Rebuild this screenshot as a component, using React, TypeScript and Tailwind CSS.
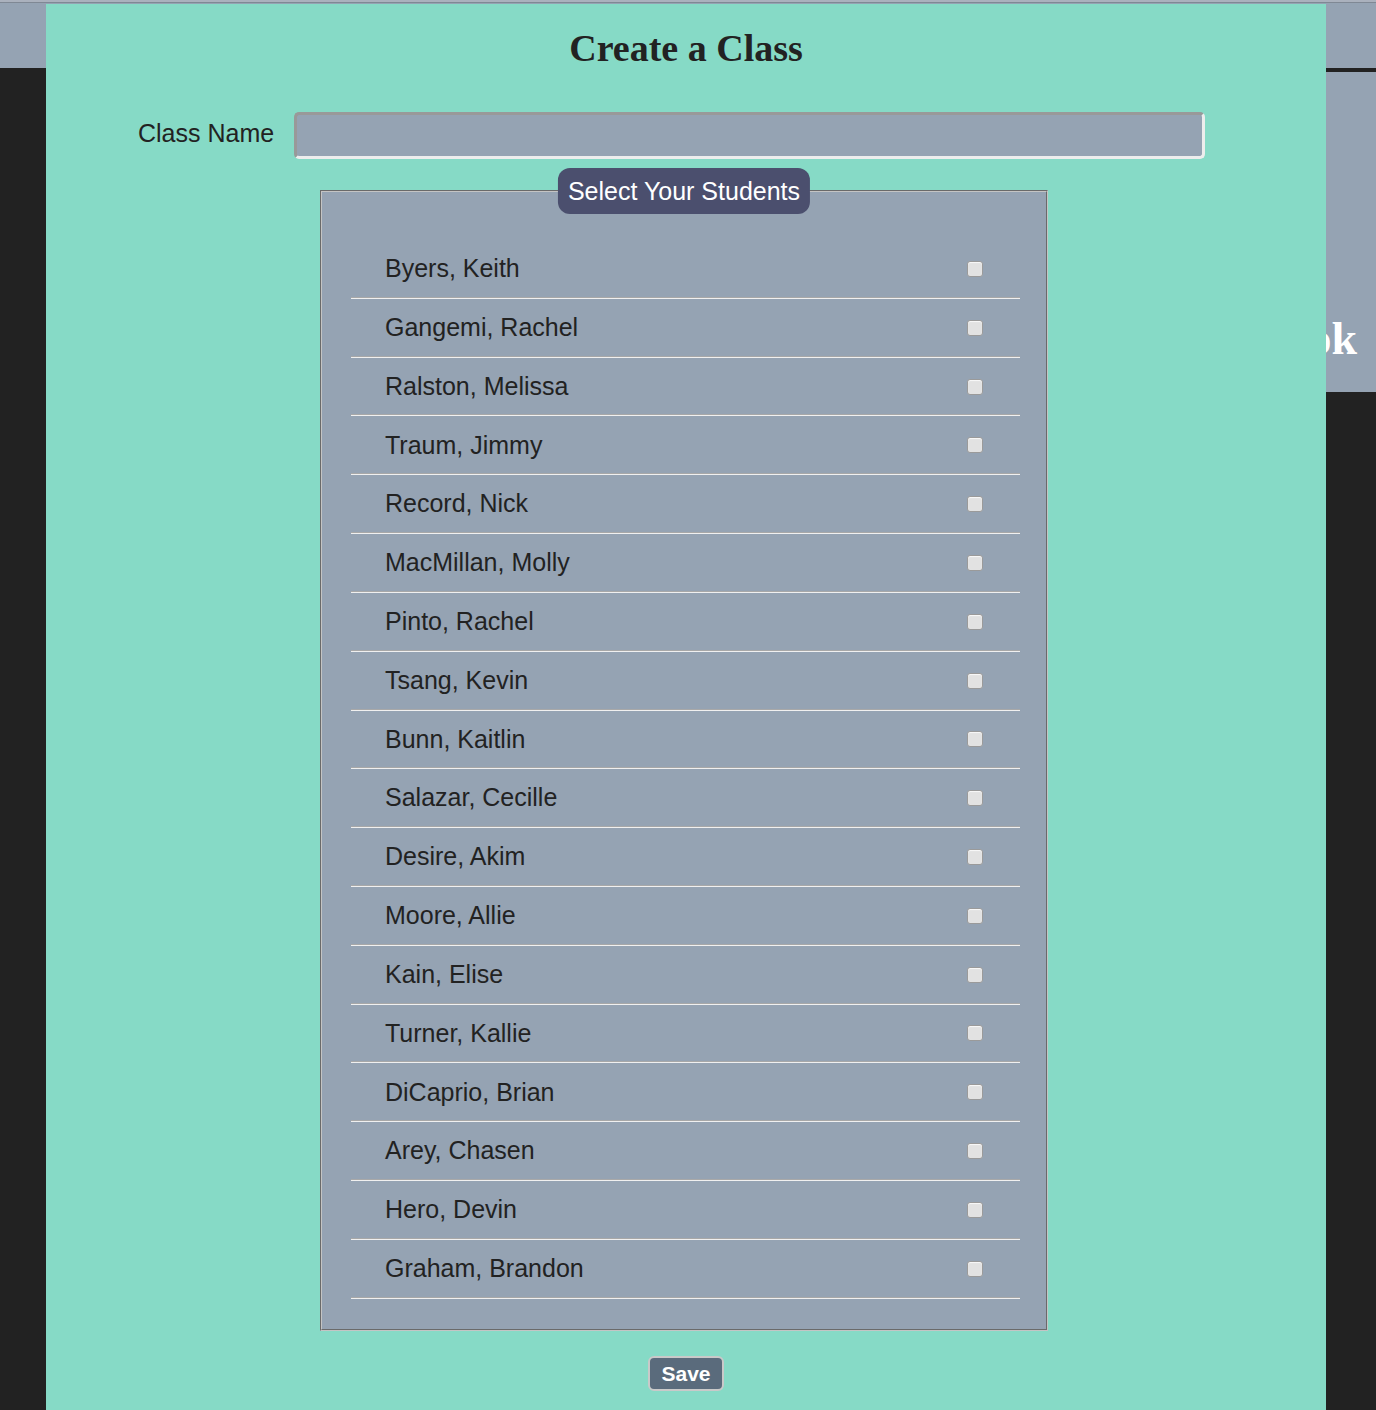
import React from "react";

const students = [
  "Byers, Keith",
  "Gangemi, Rachel",
  "Ralston, Melissa",
  "Traum, Jimmy",
  "Record, Nick",
  "MacMillan, Molly",
  "Pinto, Rachel",
  "Tsang, Kevin",
  "Bunn, Kaitlin",
  "Salazar, Cecille",
  "Desire, Akim",
  "Moore, Allie",
  "Kain, Elise",
  "Turner, Kallie",
  "DiCaprio, Brian",
  "Arey, Chasen",
  "Hero, Devin",
  "Graham, Brandon",
];

const App: React.FC = () => {
  return (
    <div className="relative h-[1410px] overflow-hidden bg-[#222222] font-['Liberation_Sans',Arial,sans-serif]">
      {/* page behind the modal */}
      <div className="h-[3px] border-b border-[#7f8894] bg-[#aab1bd]" />
      <div className="h-[65px] bg-[#95a3b3]" />
      <div className="h-[4px] bg-[#222222]" />
      <div className="flex justify-end">
        <div className="flex h-[320px] w-[420px] items-end justify-end bg-[#95a3b3] pb-[19px] pr-[19px]">
          <span className="font-['Liberation_Serif',serif] text-[46px] font-bold text-white">
            Gradebook
          </span>
        </div>
      </div>

      {/* modal */}
      <div className="absolute left-[46px] top-[4px] h-[1406px] w-[1280px] bg-[#86dac6]">
        <h1 className="pt-[22px] text-center font-['Liberation_Serif',serif] text-[38px] font-bold leading-[44px] text-[#222222]">
          Create a Class
        </h1>

        <div className="mt-[42px] flex items-center pl-[92px]">
          <label className="mr-[20px] pb-[4px] text-[25px] text-[#222222]">Class Name</label>
          <input
            type="text"
            className="h-[47px] w-[911px] rounded-[5px] border-[3px] border-b-[#ededed] border-l-[#999999] border-r-[#ededed] border-t-[#999999] bg-[#95a3b3] outline-none"
          />
        </div>

        <div className="relative ml-[274px] mt-[31px] w-[728px] border border-b-[#c4c4c4] border-l-[#6a6a6a] border-r-[#c4c4c4] border-t-[#6a6a6a]">
          <div className="border border-b-[#6a6a6a] border-l-[#c4c4c4] border-r-[#6a6a6a] border-t-[#c4c4c4] bg-[#95a3b3] pb-[30px] pt-[48px]">
            <ul className="ml-[29px] mr-[26px]">
              {students.map((name) => (
                <li key={name}>
                  <div className="flex h-[56.82px] items-center justify-between pl-[34px] pr-[37px] pt-[1px]">
                    <span className="text-[25px] text-[#222222]">{name}</span>
                    <input
                      type="checkbox"
                      className="h-[16px] w-[16px] appearance-none rounded-[3px] border border-[#9a9a9a] bg-[#e2e2e2] shadow-[inset_0_1px_1px_rgba(255,255,255,0.8)]"
                    />
                  </div>
                  <div className="border-b border-t border-b-[#f0f0f0] border-t-[#a8a8a8]" />
                </li>
              ))}
            </ul>
          </div>
          <div className="absolute left-1/2 top-[-23px] -translate-x-1/2 whitespace-nowrap rounded-[12px] bg-[#4b4f6e] px-[10px] py-[10px] text-[25px] leading-[26px] text-white">
            Select Your Students
          </div>
        </div>

        <div className="mt-[25px] flex justify-center">
          <button className="h-[35px] w-[76px] rounded-[6px] border-2 border-[#c9c9c9] bg-[#5a6b7c] text-[21px] font-bold leading-none text-white">
            Save
          </button>
        </div>
      </div>
    </div>
  );
};

export default App;
